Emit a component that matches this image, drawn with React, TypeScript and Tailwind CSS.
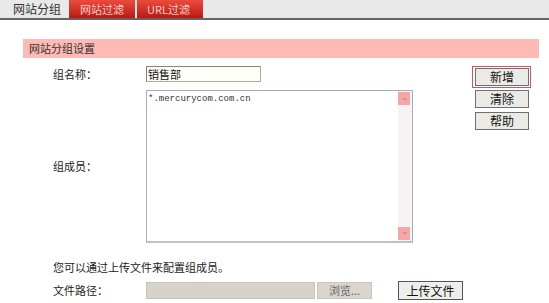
import React from "react";

const cn = "font-['Noto_Sans_CJK_SC',sans-serif]";

function Btn({ label, className = "" }: { label: string; className?: string }) {
  return (
    <div
      className={`flex h-[18px] w-[54px] items-center justify-center border border-[#6f6f6f] bg-[#ebebe6] text-[12px] leading-none text-[#111] ${className}`}
    >
      {label}
    </div>
  );
}

export default function App() {
  return (
    <div className={`h-[303px] w-[549px] overflow-hidden bg-white ${cn}`}>
      {/* tabs */}
      <div className="flex h-[20px] items-stretch border-b-2 border-[#646464] bg-[#e9e9e9]">
        <div className="flex w-[69px] items-center pl-[13px] text-[12px] leading-none text-[#333]">
          网站分组
        </div>
        <div className="flex w-[66px] items-center bg-linear-to-b from-[#ec4a3c] to-[#b91710] pl-[11px] text-[11px] leading-none text-[#fbcfc7]">
          网站过滤
        </div>
        <div className="ml-[2px] flex w-[66px] items-center bg-linear-to-b from-[#ec4a3c] to-[#b91710] pl-[10px] text-[11px] leading-none text-[#fbcfc7]">
          URL过滤
        </div>
      </div>

      {/* section header */}
      <div className="ml-[23px] mt-[19px] flex h-[19px] w-[516px] items-center bg-[#ffbab4] pl-[6px] text-[11px] leading-none text-[#333]">
        网站分组设置
      </div>

      {/* form */}
      <div className="mt-[8px] flex pl-[53px] text-[11px] text-[#222]">
        <div className="flex flex-col">
          <div className="flex h-[16px] items-center">
            <div className="w-[93px] leading-none">组名称：</div>
            <div className="flex h-[16px] w-[115px] items-center border border-[#b3a998] border-t-[#8c8274] border-l-[#8c8274] bg-[#fffffa] pl-[1px] text-[11px] leading-none text-[#111]">
              销售部
            </div>
          </div>
          <div className="mt-[8px] flex h-[153px] items-center">
            <div className="w-[93px] leading-none">组成员：</div>
            <div className="flex h-[153px] w-[267px] border border-[#a3afbb] border-b-2 border-b-[#b9c3cc]">
              <div className="flex-1 pl-[1px] pt-[2px] font-['Liberation_Mono',monospace] text-[9px] leading-[12px] text-[#333]">
                *.mercurycom.com.cn
              </div>
              <div className="flex w-[14px] flex-col bg-[#f7f3f5] py-[1px] pr-[1px]">
                <div className="flex h-[13px] w-[12px] items-center justify-center bg-[#f5a7a6]">
                  <svg width="5" height="3" viewBox="0 0 5 3">
                    <path d="M0 3 L2.5 0 L5 3 Z" fill="#e58a88" />
                  </svg>
                </div>
                <div className="flex-1" />
                <div className="flex h-[13px] w-[12px] items-center justify-center bg-[#f5a7a6]">
                  <svg width="5" height="3" viewBox="0 0 5 3">
                    <path d="M0 0 L2.5 3 L5 0 Z" fill="#e58a88" />
                  </svg>
                </div>
              </div>
            </div>
          </div>
        </div>

        <div className="ml-[59px] flex flex-col">
          <div className="border border-[#d9505e] p-[1px]">
            <Btn label="新增" className="ml-[1px] h-[17px]" />
          </div>
          <Btn label="清除" className="ml-[3px] mt-[2px]" />
          <Btn label="帮助" className="ml-[3px] mt-[4px]" />
        </div>
      </div>

      <div className="ml-[53px] mt-[17px] text-[11px] leading-[14px] text-[#222]">
        您可以通过上传文件来配置组成员。
      </div>

      <div className="ml-[53px] mt-[7px] flex h-[19px] items-center text-[11px] text-[#222]">
        <div className="w-[93px] leading-none">文件路径：</div>
        <div className="h-[17px] w-[169px] border border-[#c8c3b8] bg-[#d7d3ca]" />
        <div className="ml-[2px] flex h-[17px] w-[55px] items-center justify-center border border-[#cbc6bc] bg-[#dad6cd] text-[11px] leading-none text-[#666]">
          浏览...
        </div>
        <div className="ml-[26px] flex h-[19px] w-[65px] items-center justify-center border border-[#555] bg-[#eeeeea] text-[12px] leading-none text-[#111]">
          上传文件
        </div>
      </div>
    </div>
  );
}
